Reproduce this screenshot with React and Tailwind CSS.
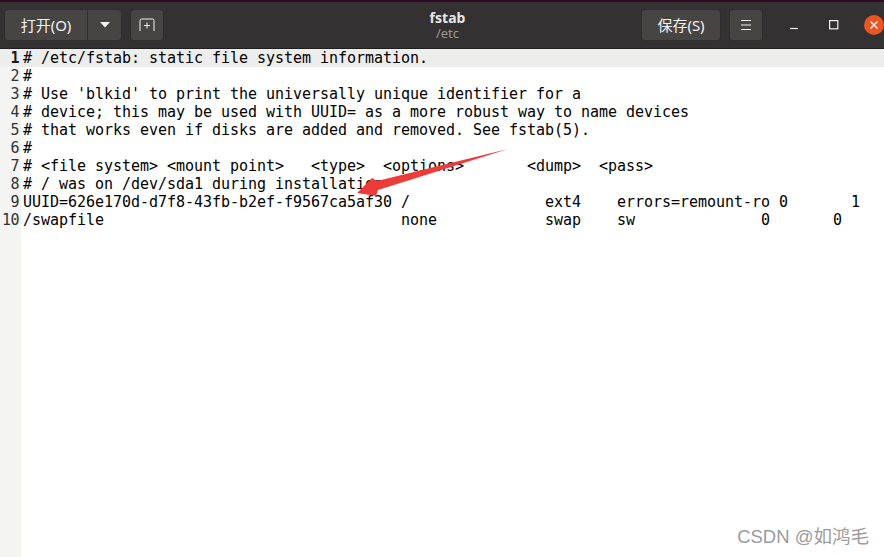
const lines = [
  "# /etc/fstab: static file system information.",
  "#",
  "# Use 'blkid' to print the universally unique identifier for a",
  "# device; this may be used with UUID= as a more robust way to name devices",
  "# that works even if disks are added and removed. See fstab(5).",
  "#",
  "# <file system> <mount point>   <type>  <options>       <dump>  <pass>",
  "# / was on /dev/sda1 during installation",
  "UUID=626e170d-d7f8-43fb-b2ef-f9567ca5af30 /               ext4    errors=remount-ro 0       1",
  "/swapfile                                 none            swap    sw              0       0",
];

const cjk = "font-['Noto_Sans','Noto_Sans_CJK_SC',sans-serif]";

export default function App() {
  return (
    <div className="relative w-[884px] h-[557px] overflow-hidden bg-white">
      <div className="h-[2px] bg-[#300a24]" />
      <header className={`h-[47px] flex items-center pl-[4px] pb-[1px] bg-[#333131] border-b border-[#1f1e1e] text-[#f2f2f2] ${cjk}`}>
        <div className="flex h-[32px] w-[118px] rounded-[4px] bg-[#464544] border border-[#2f2e2e]">
          <button className="w-[83px] text-[15px] pt-[2px] border-r border-[#2f2e2e]">打开(O)</button>
          <button className="flex-1 flex items-center justify-center">
            <svg width="12" height="6" viewBox="0 0 12 6"><path d="M1 0h10L6 5.5z" fill="#f2f2f2" /></svg>
          </button>
        </div>
        <button className="ml-[8px] w-[34px] h-[32px] flex items-center justify-center rounded-[4px] bg-[#464544] border border-[#2f2e2e]">
          <svg width="16" height="14" viewBox="0 0 16 14" fill="none" stroke="#f2f2f2" strokeWidth="1">
            <path d="M1 13V2.5A1.5 1.5 0 0 1 2.5 1h11A1.5 1.5 0 0 1 15 2.5V13" />
            <path d="M8 4.5v6M5 7.5h6" />
          </svg>
        </button>
        <div className="flex-1 flex flex-col items-center pl-[138px] pt-[1px] leading-none">
          <div className="text-[14px] font-bold leading-[16px] text-[#e6e6e6]">fstab</div>
          <div className="text-[13px] leading-[15px] text-[#9a9897]">/etc</div>
        </div>
        <button className="ml-[48px] w-[80px] h-[32px] shrink-0 rounded-[4px] bg-[#464544] border border-[#2f2e2e] text-[15px] pt-[2px]">保存(S)</button>
        <button className="ml-[8px] w-[34px] h-[32px] shrink-0 flex items-center justify-center rounded-[4px] bg-[#464544] border border-[#2f2e2e]">
          <svg width="12" height="10" viewBox="0 0 12 10" stroke="#f2f2f2" strokeWidth="1"><path d="M1 .5h10M1 5h10M1 9.5h10" /></svg>
        </button>
        <div className="w-[61px] shrink-0 flex justify-center">
          <svg width="10" height="10" viewBox="0 0 10 10" stroke="#f2f2f2" strokeWidth="1.2"><path d="M1 8.5h8" /></svg>
        </div>
        <div className="w-[20px] shrink-0 flex justify-center">
          <svg width="10" height="10" viewBox="0 0 10 10" fill="none" stroke="#f2f2f2" strokeWidth="1.2"><rect x=".6" y=".6" width="8.2" height="8.2" /></svg>
        </div>
        <div className="ml-[20px] w-[20px] h-[20px] rounded-full bg-[#e95420] flex items-center justify-center shrink-0">
          <svg width="10" height="10" viewBox="0 0 10 10" stroke="#ffffff" strokeWidth="1.3"><path d="M1.5 1.5l7 7M8.5 1.5l-7 7" /></svg>
        </div>
      </header>
      <main className="flex font-['DejaVu_Sans_Mono',monospace] text-[15px] leading-[18px] text-[#2e3436]">
        <div className="w-[21px] h-[509px] shrink-0 bg-[#f4f4f3] text-right">
          {lines.map((_, i) => (
            <div key={i} className={`pr-[2px] tracking-[-0.5px] ${i === 0 ? "font-bold bg-[#ededeb] text-[#1a1a1a]" : ""}`}>{i + 1}</div>
          ))}
        </div>
        <div className="flex-1 min-w-0 tracking-[-0.03px]">
          {lines.map((line, i) => (
            <div key={i} className={`pl-[2px] h-[18px] whitespace-pre text-black ${i === 0 ? "bg-[#ededeb]" : ""}`}>{line}</div>
          ))}
        </div>
      </main>
      <svg className="absolute left-[350px] top-[145px]" width="165" height="55" viewBox="350 145 165 55">
        <path d="M508 149 L378 190 L376 196 L357 193 L372 178 L377 181 Z" fill="#ee3b38" />
      </svg>
      <div className="absolute right-[15px] top-[525px] text-[18.5px] leading-[24px] text-[#9b9b9b] font-['Liberation_Sans','Noto_Sans_CJK_SC',sans-serif]">CSDN @如鸿毛</div>
    </div>
  );
}
